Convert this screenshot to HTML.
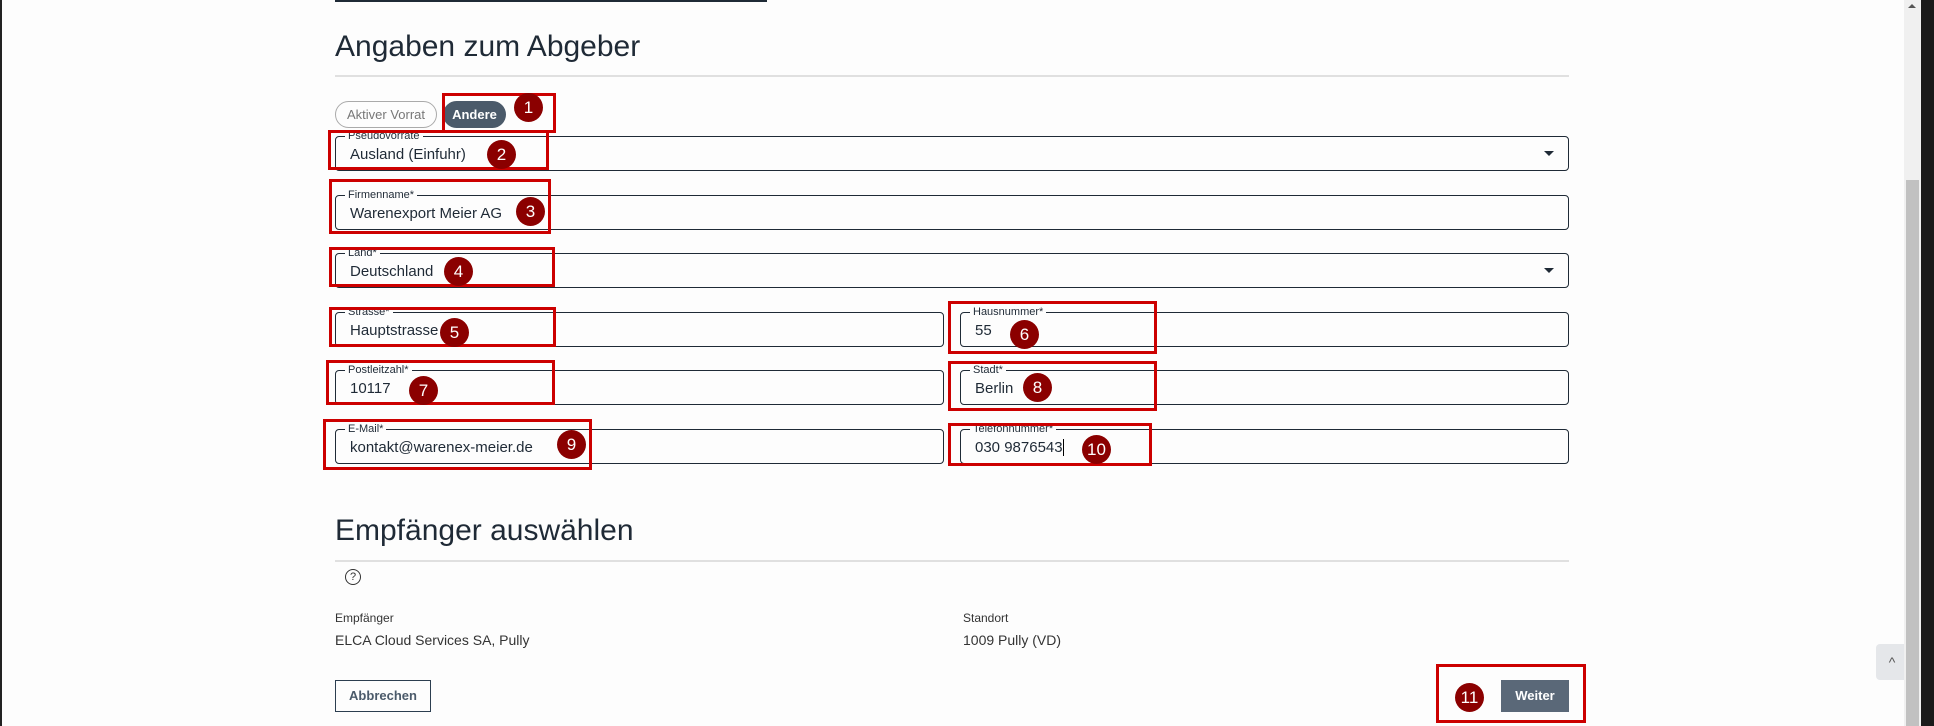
<!DOCTYPE html>
<html><head><meta charset="utf-8"><style>
*{box-sizing:border-box;margin:0;padding:0}
body{width:1934px;height:726px;background:#fdfdfd;position:relative;overflow:hidden;font-family:"Liberation Sans",sans-serif;color:#1f2937}
.a{position:absolute}
.f{position:absolute;border:1.5px solid #1f2a36;border-radius:4px;height:35px}
.f .l{position:absolute;top:-7px;left:9px;background:#fdfdfd;padding:0 3px;font-size:11px;color:#1f2a36;line-height:12px}
.f .v{position:absolute;left:14px;top:9px;font-size:15px;color:#1f2a36}
.arr{position:absolute;right:14px;top:14px;width:0;height:0;border-left:5px solid transparent;border-right:5px solid transparent;border-top:5px solid #1f2a36}
.r{position:absolute;border:3px solid #cc0000}
.c{position:absolute;width:29px;height:29px;border-radius:50%;background:#8b0000;color:#fff;font-size:17px;text-align:center;line-height:29px}
h2{position:absolute;font-weight:normal;font-size:30px;color:#1f2a36;left:335px}
.hr{position:absolute;left:335px;width:1234px;height:2px;background:#e0e0e0}
</style></head><body>
<div class="a" style="left:0;top:0;width:2px;height:726px;background:#222"></div>
<div class="a" style="left:335px;top:0;width:432px;height:2px;background:#1f2a36"></div>
<h2 style="top:30px">Angaben zum Abgeber</h2>
<div class="hr" style="top:75px"></div>
<div class="a" style="left:335px;top:101px;width:102px;height:27px;border:1px solid #aaa;border-radius:14px;font-size:13px;color:#777;text-align:center;line-height:25px">Aktiver Vorrat</div>
<div class="a" style="left:443px;top:101px;width:63px;height:27px;background:#4b5a6a;border-radius:14px;font-size:13px;color:#fff;font-weight:bold;text-align:center;line-height:27px">Andere</div>

<div class="f" style="left:335px;top:136px;width:1234px"><span class="l">Pseudovorräte</span><span class="v">Ausland (Einfuhr)</span><span class="arr"></span></div>
<div class="f" style="left:335px;top:195px;width:1234px"><span class="l">Firmenname*</span><span class="v">Warenexport Meier AG</span></div>
<div class="f" style="left:335px;top:253px;width:1234px"><span class="l">Land*</span><span class="v">Deutschland</span><span class="arr"></span></div>
<div class="f" style="left:335px;top:312px;width:609px"><span class="l">Strasse*</span><span class="v">Hauptstrasse</span></div>
<div class="f" style="left:960px;top:312px;width:609px"><span class="l">Hausnummer*</span><span class="v">55</span></div>
<div class="f" style="left:335px;top:370px;width:609px"><span class="l">Postleitzahl*</span><span class="v">10117</span></div>
<div class="f" style="left:960px;top:370px;width:609px"><span class="l">Stadt*</span><span class="v">Berlin</span></div>
<div class="f" style="left:335px;top:429px;width:609px"><span class="l">E-Mail*</span><span class="v">kontakt@warenex-meier.de</span></div>
<div class="f" style="left:960px;top:429px;width:609px"><span class="l">Telefonnummer*</span><span class="v">030 9876543<span style="border-right:1px solid #000"></span></span></div>

<h2 style="top:514px">Empfänger auswählen</h2>
<div class="hr" style="top:560px"></div>
<div class="a" style="left:345px;top:569px;width:16px;height:16px;border:1.3px solid #333;border-radius:50%;font-size:11px;text-align:center;line-height:14px;color:#333">?</div>
<div class="a" style="left:335px;top:611px;font-size:12px;color:#333">Empfänger</div>
<div class="a" style="left:335px;top:632px;font-size:14px;color:#333">ELCA Cloud Services SA, Pully</div>
<div class="a" style="left:963px;top:611px;font-size:12px;color:#333">Standort</div>
<div class="a" style="left:963px;top:632px;font-size:14px;color:#333">1009 Pully (VD)</div>
<div class="a" style="left:335px;top:680px;width:96px;height:32px;border:1.5px solid #2c3e50;font-size:13px;font-weight:bold;color:#4b5a6a;text-align:center;line-height:29px">Abbrechen</div>
<div class="a" style="left:1501px;top:680px;width:68px;height:32px;background:#5a6878;font-size:13px;font-weight:bold;color:#fff;text-align:center;line-height:32px">Weiter</div>

<div class="a" style="left:1876px;top:644px;width:32px;height:36px;background:#e5e7ea;border-radius:4px 0 0 4px;text-align:center;line-height:36px;font-size:14px;color:#555">^</div>
<div class="a" style="left:1904px;top:0;width:17px;height:726px;background:#f0f0f0"></div>
<div class="a" style="left:1906px;top:180px;width:13px;height:546px;background:#c1c1c1"></div>
<div class="a" style="left:1908px;top:4px;width:0;height:0;border-left:4px solid transparent;border-right:4px solid transparent;border-bottom:4px solid #555"></div>
<div class="a" style="left:1921px;top:0;width:13px;height:726px;background:#1a1a1a"></div>

<div class="r" style="left:442px;top:93px;width:114px;height:40px"></div>
<div class="r" style="left:328px;top:130px;width:221px;height:40px"></div>
<div class="r" style="left:329px;top:179px;width:222px;height:55px"></div>
<div class="r" style="left:329px;top:247px;width:226px;height:40px"></div>
<div class="r" style="left:329px;top:307px;width:227px;height:40px"></div>
<div class="r" style="left:948px;top:301px;width:209px;height:53px"></div>
<div class="r" style="left:326px;top:360px;width:229px;height:45px"></div>
<div class="r" style="left:948px;top:361px;width:209px;height:50px"></div>
<div class="r" style="left:323px;top:419px;width:269px;height:51px"></div>
<div class="r" style="left:948px;top:423px;width:204px;height:43px"></div>
<div class="r" style="left:1436px;top:664px;width:150px;height:59px"></div>

<div class="c" style="left:514px;top:93px">1</div>
<div class="c" style="left:487px;top:140px">2</div>
<div class="c" style="left:516px;top:197px">3</div>
<div class="c" style="left:444px;top:257px">4</div>
<div class="c" style="left:440px;top:318px">5</div>
<div class="c" style="left:1010px;top:320px">6</div>
<div class="c" style="left:409px;top:376px">7</div>
<div class="c" style="left:1023px;top:373px">8</div>
<div class="c" style="left:557px;top:430px">9</div>
<div class="c" style="left:1082px;top:435px">10</div>
<div class="c" style="left:1455px;top:683px">11</div>
</body></html>
